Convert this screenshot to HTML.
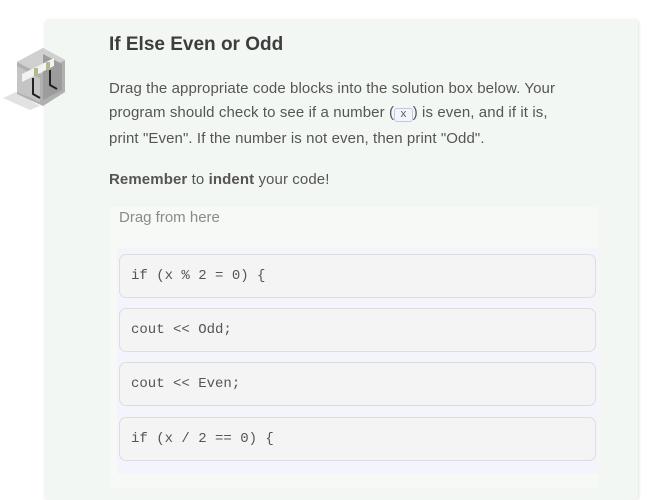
<!DOCTYPE html>
<html><head><style>
body{margin:0;width:665px;height:488px;background:#fff;overflow:hidden;font-family:"Liberation Sans",sans-serif;position:relative}
.card{position:absolute;left:44px;top:20px;width:594px;height:480px;background:#f3f7f4;border-radius:4px;box-shadow:1px 0 3px rgba(0,0,0,.12)}
h1{position:absolute;left:109px;top:34px;margin:0;font-size:19px;font-weight:bold;color:#3d3d3d}
p{position:absolute;left:109px;margin:0;font-size:15px;color:#555;line-height:24px;width:470px;letter-spacing:0.1px}
code{font-family:"Liberation Mono",monospace;font-size:11px;border:1px solid #b8c8ee;background:#f3f5fb;padding:0 5px;border-radius:3px;letter-spacing:0}
.drag{position:absolute;left:110px;top:207px;width:488px;height:281px;background:#f7f9f7}
.drag span{position:absolute;left:9px;top:2px;font-size:15px;color:#8a8a8a}
.area{position:absolute;left:117px;top:248px;width:481px;height:226px;background:#f4f4fd}
.blk{position:absolute;left:119px;width:477px;height:44px;background:#f4f4f4;border:1px solid #ddd;border-radius:7px;box-sizing:border-box;font-family:"Liberation Mono",monospace;font-size:14px;color:#555;padding-left:11px;line-height:42px}
</style></head><body>
<div class="card"></div>
<svg style="position:absolute;left:0;top:40px" width="80" height="80" viewBox="0 0 80 80">
<polygon points="3,58 30,70 40,66 16,52" fill="#e2e2e2"/>
<polygon points="17,22 43,8 65,20 65,52 43,66 17,54" fill="#b0b0b0"/>
<polygon points="17,22 43,8 65,20 40,34" fill="#d0d0d0"/>
<polygon points="43,14 62,24 62,50 43,60" fill="#9c9c9c"/>
<polygon points="17,26 40,38 40,62 17,52" fill="#c4c4c4"/>
<polygon points="22,34 54,18 54,26 22,42" fill="#f2f2f2"/>
<rect x="34" y="28" width="4" height="8" fill="#b5b98a"/>
<rect x="46" y="22" width="4" height="8" fill="#b5b98a"/>
<path d="M33 38 L33 54 L40 58 M50 30 L50 45 L57 49" stroke="#222" stroke-width="2" fill="none"/>
</svg>
<h1>If Else Even or Odd</h1>
<p style="top:77px">Drag the appropriate code blocks into the solution box below. Your program should check to see if a number (<code>x</code>) is even, and if it is,<br>print "Even". If the number is not even, then print "Odd".</p>
<p style="top:168px"><b>Remember</b> to <b>indent</b> your code!</p>
<div class="drag"><span>Drag from here</span></div>
<div class="area"></div>
<div class="blk" style="top:254px">if (x % 2 = 0) {</div>
<div class="blk" style="top:308px">cout &lt;&lt; Odd;</div>
<div class="blk" style="top:362px">cout &lt;&lt; Even;</div>
<div class="blk" style="top:417px">if (x / 2 == 0) {</div>
</body></html>
